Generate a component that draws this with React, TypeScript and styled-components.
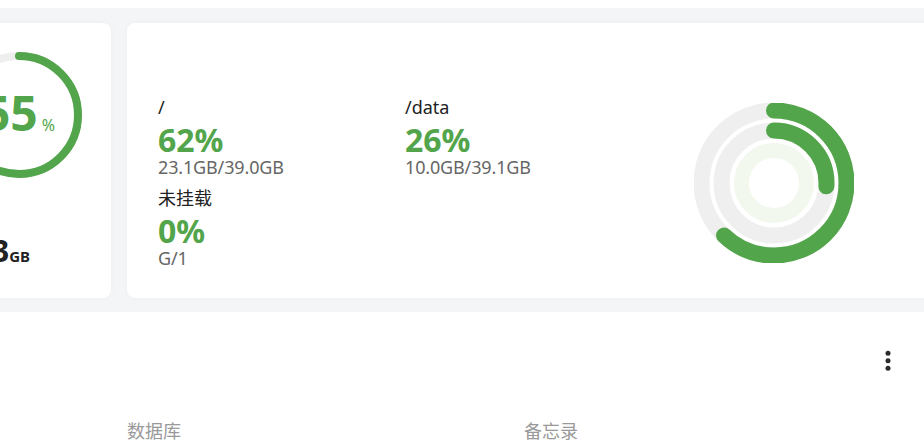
import React from "react";
import styled, { createGlobalStyle } from "styled-components";

const GREEN = "#52a54a";

const GlobalStyle = createGlobalStyle`
  html, body {
    margin: 0;
    padding: 0;
    background: #f4f5f7;
    overflow: hidden;
    font-family: "Noto Sans", "Noto Sans CJK SC", sans-serif;
  }
`;

const Page = styled.div`
  display: flex;
  flex-direction: column;
  width: 100%;
`;

const TopPanel = styled.div`
  height: 8px;
  background: #fff;
`;

const CardRow = styled.div`
  display: flex;
  gap: 16px;
  height: 275px;
  margin: 15px -40px 14px -73px;
`;

const Card = styled.div<{ $width?: number }>`
  background: #fff;
  border-radius: 8px;
  box-shadow: 0 0 6px rgba(0, 0, 0, 0.03);
  ${({ $width }) => ($width ? `width: ${$width}px; flex: none;` : "flex: 1;")}
`;

const MemoryCard = styled(Card)`
  display: flex;
  flex-direction: column;
  align-items: center;
`;

const RingWrap = styled.div`
  display: grid;
  place-items: center;
  width: 126px;
  height: 126px;
  margin-top: 29px;

  & > * {
    grid-area: 1 / 1;
  }
`;

const RingValue = styled.div`
  display: flex;
  align-items: baseline;
  margin-top: 8px;
  color: ${GREEN};
  font-size: 48px;
  font-weight: 700;
  line-height: 48px;

  small {
    font-size: 16px;
    font-weight: 400;
    margin-left: 4px;
  }
`;

const MemoryTotal = styled.div`
  align-self: flex-end;
  margin-top: 55px;
  padding-right: 81px;
  color: #222;
  font-size: 30px;
  font-weight: 700;
  line-height: 36px;
  white-space: nowrap;

  small {
    font-size: 15px;
  }
`;

const DiskCard = styled(Card)`
  display: flex;
  align-items: flex-start;
  padding-left: 31px;
`;

const DiskGrid = styled.div`
  display: grid;
  grid-template-columns: 247px 247px;
  row-gap: 9px;
  padding-top: 72px;
`;

const DiskItem = styled.div`
  display: flex;
  flex-direction: column;
`;

const DiskName = styled.div`
  color: #222;
  font-size: 18px;
  line-height: 24px;
`;

const DiskPercent = styled.div`
  margin-top: 4px;
  color: ${GREEN};
  font-size: 32px;
  font-weight: 700;
  line-height: 34px;
`;

const DiskSize = styled.div`
  color: #666;
  font-size: 18px;
  line-height: 20px;
  letter-spacing: -0.15px;
`;

const ChartBox = styled.div`
  margin: 80px 0 0 42px;
  width: 160px;
  height: 160px;
`;

const BottomPanel = styled.div`
  flex: 1;
  min-height: 200px;
  background: #fff;
  padding: 38px 33px 0 0;
`;

const PanelHeader = styled.div`
  display: flex;
  justify-content: flex-end;
`;

const ShortcutGrid = styled.div`
  display: grid;
  grid-template-columns: repeat(3, 397px);
  margin-top: 47px;
  padding-left: 127px;
`;

const ShortcutLabel = styled.div`
  color: #999;
  font-size: 18px;
  line-height: 24px;
`;

const disks = [
  { name: "/", percent: 62, size: "23.1GB/39.0GB" },
  { name: "/data", percent: 26, size: "10.0GB/39.1GB" },
  { name: "未挂载", percent: 0, size: "G/1" },
];

const Ring = ({ size, radius, width, percent, track }: {
  size: number; radius: number; width: number; percent: number; track: string;
}) => {
  const c = 2 * Math.PI * radius;
  const mid = size / 2;
  return (
    <g>
      <circle cx={mid} cy={mid} r={radius} fill="none" stroke={track} strokeWidth={width} />
      {percent > 0 && (
        <circle
          cx={mid}
          cy={mid}
          r={radius}
          fill="none"
          stroke={GREEN}
          strokeWidth={width}
          strokeLinecap="round"
          strokeDasharray={`${(c * percent) / 100} ${c}`}
          transform={`rotate(-90 ${mid} ${mid})`}
        />
      )}
    </g>
  );
};

const App = () => {
  return (
    <Page>
      <GlobalStyle />
      <TopPanel />
      <CardRow>
        <MemoryCard $width={184}>
          <RingWrap>
            <svg width="126" height="126" viewBox="0 0 126 126">
              <Ring size={126} radius={59} width={8} percent={55} track="#eeeeee" />
            </svg>
            <RingValue>
              55<small>%</small>
            </RingValue>
          </RingWrap>
          <MemoryTotal>
            14.3<small>GB</small>
          </MemoryTotal>
        </MemoryCard>

        <DiskCard>
          <DiskGrid>
            {disks.map((d) => (
              <DiskItem key={d.name}>
                <DiskName>{d.name}</DiskName>
                <DiskPercent>{d.percent}%</DiskPercent>
                <DiskSize>{d.size}</DiskSize>
              </DiskItem>
            ))}
          </DiskGrid>
          <ChartBox>
            <svg width="160" height="160" viewBox="0 0 160 160">
              <Ring size={160} radius={72.5} width={16} percent={62} track="#efefef" />
              <Ring size={160} radius={52.5} width={16} percent={26} track="#efefef" />
              <Ring size={160} radius={32.5} width={15} percent={0} track="#f2f8ee" />
            </svg>
          </ChartBox>
        </DiskCard>
      </CardRow>

      <BottomPanel>
        <PanelHeader>
          <svg width="6" height="22" viewBox="0 0 6 22">
            <circle cx="3" cy="3.3" r="2.5" fill="#2b2b2b" />
            <circle cx="3" cy="10.7" r="2.5" fill="#2b2b2b" />
            <circle cx="3" cy="18.3" r="2.5" fill="#2b2b2b" />
          </svg>
        </PanelHeader>
        <ShortcutGrid>
          <ShortcutLabel>数据库</ShortcutLabel>
          <ShortcutLabel>备忘录</ShortcutLabel>
        </ShortcutGrid>
      </BottomPanel>
    </Page>
  );
};

export default App;
